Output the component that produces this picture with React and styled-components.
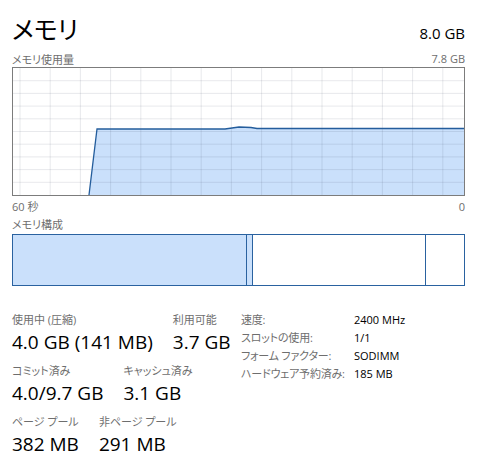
import React from "react";
import styled, { createGlobalStyle } from "styled-components";

const GlobalStyle = createGlobalStyle`
    html, body {
        margin: 0;
        padding: 0;
        background: #ffffff;
    }
    body {
        font-family: "Open Sans", "Noto Sans CJK JP", sans-serif;
        font-feature-settings: "palt";
        color: #000;
    }
`;

const Page = styled.div`
    width: 453px;
    padding: 14px 24px 0 12px;
    display: flex;
    flex-direction: column;
`;

const Header = styled.div`
    display: flex;
    justify-content: space-between;
    align-items: baseline;
    height: 36px;
`;

const Title = styled.h1`
    margin: 0;
    font-size: 25px;
    font-weight: 400;
    line-height: 30px;
`;

const Total = styled.span`
    font-size: 15px;
    line-height: 20px;
`;

const Caption = styled.div`
    display: flex;
    justify-content: space-between;
    align-items: center;
    height: ${(p) => p.$h || 17}px;
    font-size: 11px;
    color: #6e6e6e;
`;

const ChartFrame = styled.div`
    border: 1px solid #7c7c7c;
    height: 127px;
    background: #fff;

    svg {
        display: block;
        width: 100%;
        height: 100%;
    }
`;

const CompBar = styled.div`
    display: flex;
    height: 50px;
    border: 1px solid #2a62a0;
    margin-top: 2px;
`;

const Segment = styled.div`
    flex: ${(p) => p.$grow} 0 0;
    background: ${(p) => (p.$filled ? "#cae0fb" : "#fff")};
    border-right: ${(p) => (p.$last ? "none" : "1px solid #2a62a0")};
`;

const Stats = styled.div`
    display: flex;
    margin-top: 27px;
`;

const LeftStats = styled.div`
    width: 229px;
    display: flex;
    flex-direction: column;
    gap: 6px;
`;

const StatRow = styled.div`
    display: flex;
    gap: 20px;
`;

const Stat = styled.div`
    display: flex;
    flex-direction: column;
`;

const Label = styled.span`
    font-size: 11px;
    line-height: 14px;
    color: #6e6e6e;
    white-space: nowrap;
`;

const Value = styled.span`
    font-size: 19px;
    line-height: 31px;
    color: #000;
    white-space: nowrap;
`;

const Details = styled.div`
    display: grid;
    grid-template-columns: 113px auto;
    grid-auto-rows: 18px;
    margin-top: -3px;
    font-size: 11px;
    align-items: center;
`;

const DetailKey = styled.span`
    color: #6e6e6e;
    white-space: nowrap;
    letter-spacing: -0.2px;
`;

const DetailVal = styled.span`
    color: #000;
`;

const W = 451;
const H = 127;

const UsageChart = () => {
    const vlines = Array.from({ length: 15 }, (_, k) => 7 + k * 30.2);
    const hlines = Array.from({ length: 9 }, (_, k) => (k + 1) * 12.7);
    const pts = [
        [76, H],
        [84, 61],
        [212, 61],
        [226, 59],
        [238, 59.5],
        [244, 60.5],
        [W, 60.5],
    ];
    const line = pts.map((p) => p.join(",")).join(" ");
    const area = line + ` ${W},${H}`;
    return (
        <svg viewBox={`0 0 ${W} ${H}`} preserveAspectRatio="none">
            <polygon points={area} fill="#cae0fb" />
            {vlines.map((x) => (
                <line key={"v" + x} x1={x} x2={x} y1={0} y2={H} stroke="#2a3a50" strokeOpacity="0.11" strokeWidth="1" />
            ))}
            {hlines.map((y) => (
                <line key={"h" + y} x1={0} x2={W} y1={y} y2={y} stroke="#2a3a50" strokeOpacity="0.11" strokeWidth="1" />
            ))}
            <polyline points={line} fill="none" stroke="#245d9c" strokeWidth="1.3" />
        </svg>
    );
};

const composition = [
    { grow: 233, filled: true },
    { grow: 5, filled: true },
    { grow: 172, filled: false },
    { grow: 38, filled: false, last: true },
];

const stats = [
    [
        { label: "使用中 (圧縮)", value: "4.0 GB (141 MB)" },
        { label: "利用可能", value: "3.7 GB" },
    ],
    [
        { label: "コミット済み", value: "4.0/9.7 GB" },
        { label: "キャッシュ済み", value: "3.1 GB" },
    ],
    [
        { label: "ページ プール", value: "382 MB" },
        { label: "非ページ プール", value: "291 MB" },
    ],
];

const details = [
    ["速度:", "2400 MHz"],
    ["スロットの使用:", "1/1"],
    ["フォーム ファクター:", "SODIMM"],
    ["ハードウェア予約済み:", "185 MB"],
];

export default function App() {
    return (
        <>
            <GlobalStyle />
            <Page>
                <Header>
                    <Title>メモリ</Title>
                    <Total>8.0 GB</Total>
                </Header>
                <Caption>
                    <span>メモリ使用量</span>
                    <span>7.8 GB</span>
                </Caption>
                <ChartFrame>
                    <UsageChart />
                </ChartFrame>
                <Caption $h={20}>
                    <span>60 秒</span>
                    <span>0</span>
                </Caption>
                <Caption $h={16}>
                    <span>メモリ構成</span>
                </Caption>
                <CompBar>
                    {composition.map((s, i) => (
                        <Segment key={i} $grow={s.grow} $filled={s.filled} $last={s.last} />
                    ))}
                </CompBar>
                <Stats>
                    <LeftStats>
                        {stats.map((row, i) => (
                            <StatRow key={i}>
                                {row.map((s) => (
                                    <Stat key={s.label}>
                                        <Label>{s.label}</Label>
                                        <Value>{s.value}</Value>
                                    </Stat>
                                ))}
                            </StatRow>
                        ))}
                    </LeftStats>
                    <Details>
                        {details.map(([k, v]) => (
                            <React.Fragment key={k}>
                                <DetailKey>{k}</DetailKey>
                                <DetailVal>{v}</DetailVal>
                            </React.Fragment>
                        ))}
                    </Details>
                </Stats>
            </Page>
        </>
    );
}
